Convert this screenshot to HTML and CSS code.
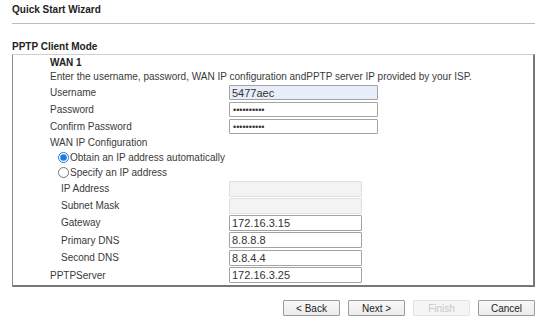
FILE: index.html
```html
<!DOCTYPE html>
<html lang="en">
<head>
    <meta charset="UTF-8">
    <meta name="viewport" content="width=device-width, initial-scale=1.0">
    <title>Quick Start Wizard</title>
    <link rel="stylesheet" href="styles.css">
</head>
<body>
    <div class="wizard">
        <div class="wizard-title">Quick Start Wizard</div>
        <div class="section-title">PPTP Client Mode</div>

        <div class="panel">
            <div class="line line-head">WAN 1</div>
            <div class="line line-note">Enter the username, password, WAN IP configuration andPPTP server IP provided by your ISP.</div>

            <div class="row">
                <label for="username">Username</label>
                <input class="field field-wide autofill" id="username" type="text" value="5477aec" readonly>
            </div>
            <div class="row">
                <label for="password">Password</label>
                <input class="field field-wide field-secret" id="password" type="password" value="abcdefghij" readonly>
            </div>
            <div class="row">
                <label for="confirm">Confirm Password</label>
                <input class="field field-wide field-secret" id="confirm" type="password" value="abcdefghij" readonly>
            </div>
            <div class="line line-sub">WAN IP Configuration</div>
            <div class="line line-radio">
                <input type="radio" name="ipmode" id="auto" checked>
                <label for="auto">Obtain an IP address automatically</label>
            </div>
            <div class="line line-radio">
                <input type="radio" name="ipmode" id="manual">
                <label for="manual">Specify an IP address</label>
            </div>

            <div class="row row-indent">
                <label for="ipaddr">IP Address</label>
                <input class="field" id="ipaddr" type="text" disabled>
            </div>
            <div class="row row-indent">
                <label for="mask">Subnet Mask</label>
                <input class="field" id="mask" type="text" disabled>
            </div>
            <div class="row row-indent row-tall">
                <label for="gateway">Gateway</label>
                <input class="field" id="gateway" type="text" value="172.16.3.15" readonly>
            </div>
            <div class="row row-indent row-tall">
                <label for="dns1">Primary DNS</label>
                <input class="field" id="dns1" type="text" value="8.8.8.8" readonly>
            </div>
            <div class="row row-indent row-tall">
                <label for="dns2">Second DNS</label>
                <input class="field" id="dns2" type="text" value="8.8.4.4" readonly>
            </div>
            <div class="row row-tall">
                <label for="server">PPTPServer</label>
                <input class="field" id="server" type="text" value="172.16.3.25" readonly>
            </div>
        </div>

        <div class="actions">
            <button type="button">&lt; Back</button>
            <button type="button">Next &gt;</button>
            <button type="button" disabled>Finish</button>
            <button type="button">Cancel</button>
        </div>
    </div>
</body>
</html>
```

FILE: styles.css
```css
* {
    box-sizing: border-box;
}

body {
    margin: 0;
    padding: 0 15px 0 12px;
    background-color: #fff;
    color: #3a3a3a;
    font-family: 'Liberation Sans', Arial, sans-serif;
    font-size: 10px;
}

.wizard-title {
    padding: 3px 0 6px;
    line-height: 14px;
    font-weight: bold;
    color: #222;
    border-bottom: 1px solid #bdbdbd;
}

.section-title {
    margin-top: 16px;
    line-height: 14px;
    font-weight: bold;
    color: #222;
}

.panel {
    padding: 0 0 1px 37px;
    border-top: 1px solid #cfcfcf;
    border-left: 1px solid #8a8a8a;
    border-right: 2px solid #777;
    border-bottom: 2px solid #777;
}

.line {
    display: flex;
    align-items: center;
    height: 15px;
}

.line-head {
    height: 14px;
    font-weight: bold;
    color: #222;
}

.line-radio {
    padding-left: 8px;
}

.line-radio input {
    width: 11px;
    height: 11px;
    margin: 0 1px 0 0;
    accent-color: #1c7ce0;
}

.row {
    display: flex;
    align-items: center;
    height: 17px;
}

.row label {
    flex: none;
    width: 179px;
}

.row-indent label {
    padding-left: 11px;
}

.row-tall {
    height: 17.5px;
}

.field {
    width: 133px;
    height: 16px;
    margin: 0;
    padding: 0 2px;
    border: 1px solid #a3a3a3;
    border-radius: 1px;
    background-color: #fff;
    color: #333;
    font-family: inherit;
    font-size: 11px;
    outline: none;
}

.field-wide {
    width: 149px;
    height: 15px;
}

.field-secret {
    font-size: 9px;
    padding-left: 3px;
}

.autofill {
    background-color: #e8eef9;
}

.field:disabled {
    background-color: #f3f3f3;
    border-color: #e0e0e0;
}

.actions {
    display: flex;
    justify-content: flex-end;
    gap: 8px;
    margin-top: 13px;
}

.actions button {
    width: 57px;
    height: 16px;
    padding: 0;
    border: 1px solid #9a9a9a;
    border-radius: 1px;
    background: linear-gradient(#f8f8f8, #ececec);
    color: #222;
    font-family: inherit;
    font-size: 10px;
}

.actions button:disabled {
    border-color: #e2e2e2;
    background: #f5f5f5;
    color: #c8c8c8;
}
```
